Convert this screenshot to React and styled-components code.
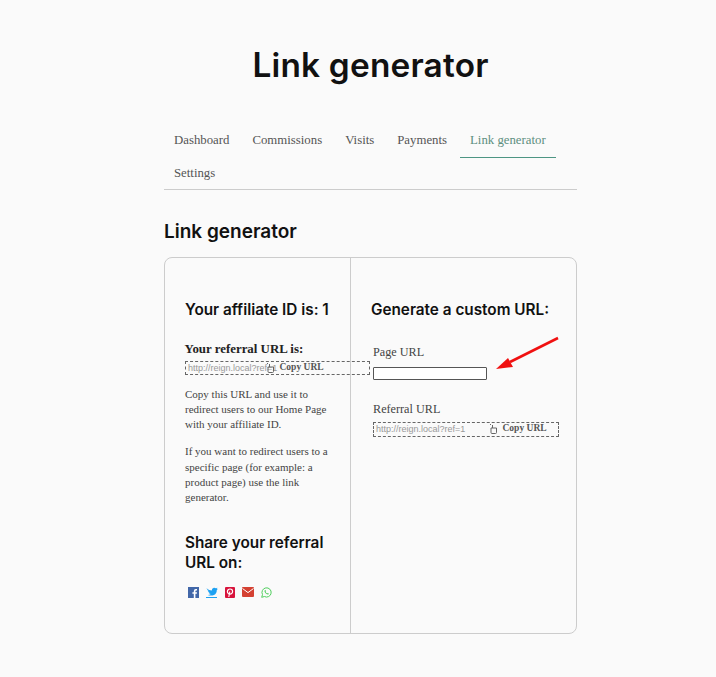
import React from "react";
import styled, { createGlobalStyle } from "styled-components";

const Global = createGlobalStyle`
  html, body { margin: 0; padding: 0; background: #fafafa; }
  body { font-family: "Liberation Serif", serif; color: #333; }
`;
const Page = styled.div`
  width: 716px; height: 677px; overflow: hidden; position: relative; box-sizing: border-box; padding-left: 25px;
  display: flex; flex-direction: column; align-items: center;
`;
const Title = styled.h1`
  margin: 43px 0 0; font: 600 33.4px/44px Inter, sans-serif; color: #111; letter-spacing: 0.2px;
`;
const Content = styled.div`
  width: 413px; margin-top: 38px;
`;
const Tabs = styled.nav`
  display: flex; flex-wrap: wrap; border-bottom: 1px solid #ccc; height: 65px; box-sizing: border-box; align-content: flex-start;
`;
const Tab = styled.a`
  box-sizing: border-box; height: 33px; padding: 4px 10.5px 0 10px; font-size: 12.8px; line-height: 22px;
  color: ${p => (p.$active ? "#5d8f80" : "#555")};
  border-bottom: ${p => (p.$active ? "1px solid #4d9583" : "1px solid transparent")};
  margin-right: 2.5px;
`;
const Sub = styled.h2`
  margin: 30px 0 0; font: 600 19px/24px Inter, sans-serif; color: #111;
`;
const Card = styled.div`
  display: grid; grid-template-columns: 186px 1fr; margin-top: 13px; height: 377px; box-sizing: border-box;
  border: 1px solid #ccc; border-radius: 8px;
`;
const Left = styled.div`
  border-right: 1px solid #ccc; padding: 41.5px 0 0 20px; min-width: 0;
`;
const Right = styled.div`
  padding: 41.5px 0 0 20px;
`;
const H3 = styled.h3`
  margin: ${p => p.$mt || 0}px 0 0; font: 600 15.3px/20px Inter, sans-serif; color: #111; white-space: ${p => (p.$wrap ? "normal" : "nowrap")};
  width: ${p => (p.$wrap ? "150px" : "auto")};
`;
const RefLabel = styled.div`
  margin-top: 21px; font-size: 12.9px; font-weight: 700; line-height: 16px; color: #222; margin-left: -0.5px;
`;
const CopyBox = styled.div`
  box-sizing: border-box; height: ${p => p.$h}px; width: ${p => p.$w}px; border: 1px dashed #666;
  display: flex; align-items: center; margin-top: ${p => p.$mt || 0}px; background: transparent; white-space: nowrap;
`;
const Url = styled.span`
  font: 9px "Liberation Sans", sans-serif; color: #999; width: ${p => p.$w}px; padding-left: 2px; overflow: visible; flex: none;
  box-sizing: border-box;
`;
const CopyLabel = styled.span`
  font-size: 9.5px; font-weight: 700; color: #555; margin-left: 4.5px; position: relative; top: -1px;
`;
const Para = styled.p`
  margin: ${p => p.$mt}px 0 0; font-size: 11px; line-height: 15.3px; color: #444; width: 146px;
`;
const Social = styled.div`
  display: flex; gap: 7px; margin-top: 14px; margin-left: 3px; align-items: center;
`;
const Field = styled.label`
  display: block; margin-left: 2px; font-size: 12.2px; line-height: 16px; color: #444; margin-top: ${p => p.$mt}px;
`;
const Input = styled.div`
  box-sizing: border-box; width: 114px; height: 13px; border: 1px solid #555; border-radius: 1px; background: #fff; margin-top: 7px;
`;
const FieldBox = styled.div`
  margin-left: 2px;
`;
const Arrow = styled.svg`
  position: absolute; left: 493px; top: 335px;
`;

const Hand = () => (
  <svg width="9" height="10" viewBox="0 0 9 10" fill="none" stroke="#666" strokeWidth="1" style={{ flex: "none" }}>
    <path d="M2 4V8.5Q2 9.5 3 9.5H6.5Q7.5 9.5 7.5 8.5V4H2Z" />
    <path d="M3.5 4V1M2 1L1 0" />
  </svg>
);

const Fb = () => (
  <svg width="11" height="11" viewBox="0 0 11 11"><rect width="11" height="11" fill="#4267a8" /><path d="M7.4 11V6.8H8.8L9 5.2H7.4V4.2Q7.4 3.4 8.2 3.4H9V2H7.8Q5.8 2 5.8 4V5.2H4.4V6.8H5.8V11Z" fill="#fff" /></svg>
);
const Tw = () => (
  <svg width="12" height="11" viewBox="0 0 12 11"><path d="M0.5 1.2Q3 3.6 5.8 3.6Q5.6 1.2 7.9 0.7Q9 0.5 9.8 1.3L11.4 0.8L10.6 2.1L12 1.8L10.8 3Q10.8 6.6 8 8Q5 9.2 1.8 8Q3.6 8 4.8 7Q3 6.8 2.5 5.4H3.6Q1.7 4.8 1.6 3.2L2.7 3.5Q0.7 2.4 0.5 1.2Z" fill="#1da1f2" /><rect y="10" width="11" height="1" fill="#1da1f2" /></svg>
);
const Pin = () => (
  <svg width="10" height="11" viewBox="0 0 10 11"><rect width="10" height="11" rx="1" fill="#d8133c" /><circle cx="5" cy="4.6" r="2.6" fill="none" stroke="#fff" strokeWidth="1.2" /><path d="M4.8 4.5L3.8 10" stroke="#fff" strokeWidth="1.1" /></svg>
);
const Mail = () => (
  <svg width="12" height="10" viewBox="0 0 12 10"><rect width="12" height="10" rx="1" fill="#d44132" /><path d="M0.5 1.5L6 5.6L11.5 1.5" fill="none" stroke="#fff" strokeWidth="1" /></svg>
);
const Wa = () => (
  <svg width="11" height="11" viewBox="0 0 11 11" fill="none"><path d="M0.7 10.3L1.5 7.6A4.6 4.6 0 1 1 3.4 9.5Z" stroke="#4fce5d" strokeWidth="1" /><path d="M3.7 3.2Q3 4.2 4.3 6Q5.8 7.8 7.4 7.4L7.8 6.5L6.7 5.9L6.1 6.4Q5 5.8 4.5 4.7L5 4.2L4.5 3Z" fill="#4fce5d" /></svg>
);

export default function App() {
  return (
    <Page>
      <Global />
      <Title>Link generator</Title>
      <Content>
        <Tabs>
          <Tab>Dashboard</Tab>
          <Tab>Commissions</Tab>
          <Tab>Visits</Tab>
          <Tab>Payments</Tab>
          <Tab $active>Link generator</Tab>
          <Tab>Settings</Tab>
        </Tabs>
        <Sub>Link generator</Sub>
        <Card>
          <Left>
            <H3>Your affiliate ID is: 1</H3>
            <RefLabel>Your referral URL is:</RefLabel>
            <CopyBox $w={185} $h={14} $mt={4}>
              <Url $w={80}>http://reign.local?ref=1</Url>
              <Hand />
              <CopyLabel>Copy URL</CopyLabel>
            </CopyBox>
            <Para $mt={12}>Copy this URL and use it to redirect users to our Home Page with your affiliate ID.</Para>
            <Para $mt={12}>If you want to redirect users to a specific page (for example: a product page) use the link generator.</Para>
            <H3 $wrap $mt={27}>Share your referral URL on:</H3>
            <Social><Fb /><Tw /><Pin /><Mail /><Wa /></Social>
          </Left>
          <Right>
            <H3>Generate a custom URL:</H3>
            <Field $mt={24}>Page URL</Field>
            <FieldBox><Input /></FieldBox>
            <Field $mt={21}>Referral URL</Field>
            <FieldBox>
              <CopyBox $w={186} $h={15} $mt={5}>
                <Url $w={115}>http://reign.local?ref=1</Url>
                <Hand />
                <CopyLabel>Copy URL</CopyLabel>
              </CopyBox>
            </FieldBox>
          </Right>
        </Card>
      </Content>
      <Arrow width="68" height="38" viewBox="0 0 68 38">
        <path d="M65 3L17 27" stroke="#f01010" strokeWidth="2.6" fill="none" />
        <path d="M3 34L15 23L20 32Z" fill="#f01010" />
      </Arrow>
    </Page>
  );
}
